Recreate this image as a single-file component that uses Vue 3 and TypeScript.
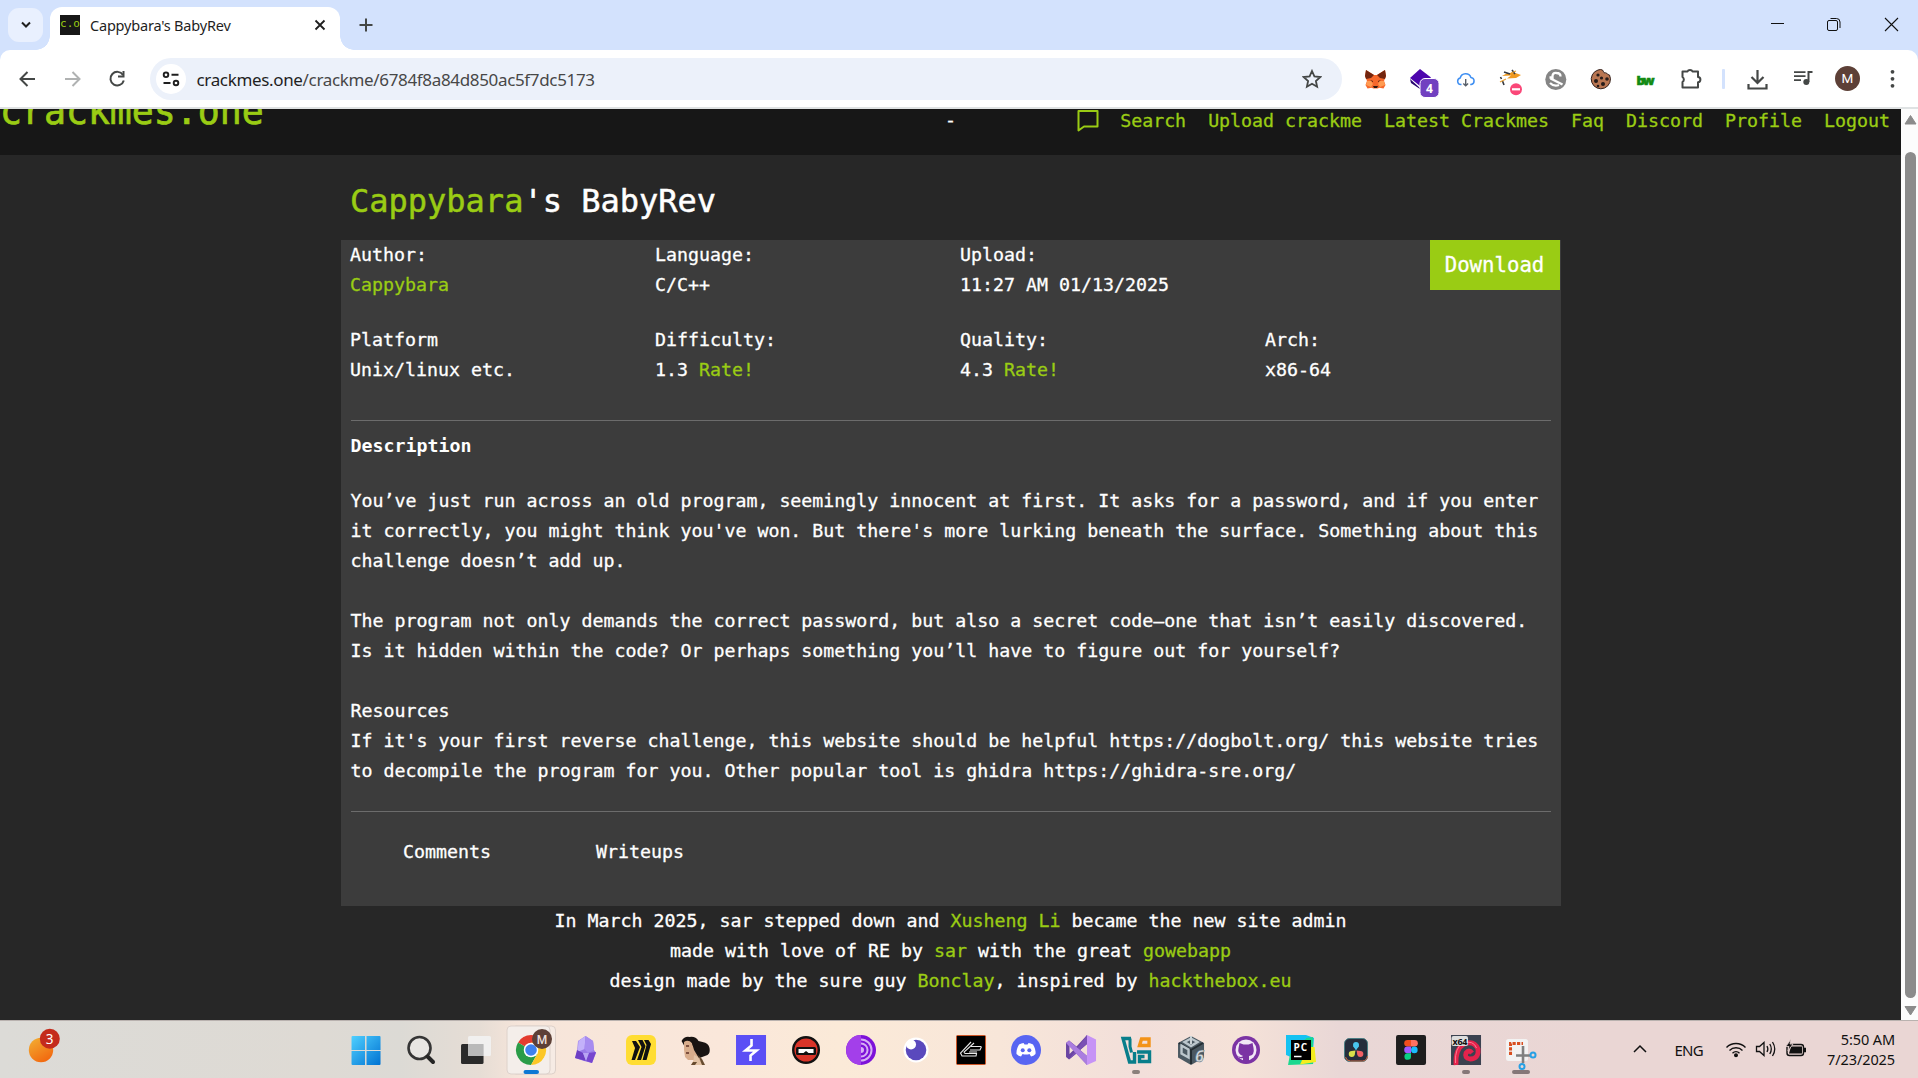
<script setup lang="ts">
interface Field {
  label: string
  value: string
  rate?: boolean
  link?: boolean
}

const navLinks: string[] = ['Search', 'Upload crackme', 'Latest Crackmes', 'Faq', 'Discord', 'Profile', 'Logout']

const topFields: Field[] = [
  { label: 'Author:', value: 'Cappybara', link: true },
  { label: 'Language:', value: 'C/C++' },
  { label: 'Upload:', value: '11:27 AM 01/13/2025' },
]

const bottomFields: Field[] = [
  { label: 'Platform', value: 'Unix/linux etc.' },
  { label: 'Difficulty:', value: '1.3', rate: true },
  { label: 'Quality:', value: '4.3', rate: true },
  { label: 'Arch:', value: 'x86-64' },
]

const description: string = [
  'You’ve just run across an old program, seemingly innocent at first. It asks for a password, and if you enter',
  "it correctly, you might think you've won. But there's more lurking beneath the surface. Something about this",
  'challenge doesn’t add up.',
  '',
  'The program not only demands the correct password, but also a secret code—one that isn’t easily discovered.',
  'Is it hidden within the code? Or perhaps something you’ll have to figure out for yourself?',
  '',
  'Resources',
  "If it's your first reverse challenge, this website should be helpful https://dogbolt.org/ this website tries",
  'to decompile the program for you. Other popular tool is ghidra https://ghidra-sre.org/',
].join('\n')
</script>

<template>
  <div class="screen">
    <div class="tabstrip">
      <div class="tab-search">
        <svg width="12" height="12" viewBox="0 0 12 12"><path d="M2 3.500 6 7.500l4-4" fill="none" stroke="#1f1f1f" stroke-width="2" /></svg>
      </div>
      <div class="tab">
        <span class="favicon">c.o</span>
        <span class="tab-title">Cappybara's BabyRev</span>
        <svg class="tab-close" width="12" height="12" viewBox="0 0 12 12"><path d="M1.500 1.500l9 9M10.500 1.500l-9 9" stroke="#1f1f1f" stroke-width="1.800" /></svg>
      </div>
      <svg class="new-tab" width="14" height="14" viewBox="0 0 14 14"><path d="M7 .5v13M.5 7h13" stroke="#444746" stroke-width="2" /></svg>
      <div class="window-buttons">
        <svg width="57" height="50" viewBox="0 0 57 50"><path d="M24 23.500h13" stroke="#111" /></svg>
        <svg width="57" height="50" viewBox="0 0 57 50"><path d="M26.500 18.500h6q3.500 0 3.500 3.500v6" fill="none" stroke="#111" /><rect x="23.500" y="20.500" width="10" height="10" rx="1.500" fill="none" stroke="#111" /></svg>
        <svg width="57" height="50" viewBox="0 0 57 50"><path d="M24 18l13 13M37 18l-13 13" stroke="#111" stroke-width="1.100" /></svg>
      </div>
    </div>

    <div class="toolbar">
      <svg class="nav-icon" width="45" height="57" viewBox="0 0 45 57"><path d="M30 29H16M22.500 22l-7 7 7 7" fill="none" stroke="#444746" stroke-width="2" /></svg>
      <svg class="nav-icon" width="45" height="57" viewBox="0 0 45 57"><path d="M15 29h14M22.500 22l7 7-7 7" fill="none" stroke="#b0b2b2" stroke-width="2" /></svg>
      <svg class="nav-icon" width="45" height="57" viewBox="0 0 45 57"><path d="M28 25A6.800 6.800 0 1 0 28.800 30.500" fill="none" stroke="#444746" stroke-width="2" /><path d="M28.500 21v5.500H23" fill="none" stroke="#444746" stroke-width="2" /></svg>
      <div class="omnibox">
        <span class="site-chip">
          <svg width="18" height="16" viewBox="0 0 18 16" fill="none" stroke="#1f1f1f" stroke-width="1.900"><circle cx="4" cy="3.800" r="2.300" /><path d="M9.500 3.800h7M1.500 12h7" /><circle cx="14" cy="12" r="2.300" /></svg>
        </span>
        <span class="url">crackmes.one<span class="path">/crackme/6784f8a84d850ac5f7dc5173</span></span>
        <svg class="star" width="20" height="20" viewBox="0 0 20 20"><path d="M10 2l2.400 5.400 5.900.6-4.400 4 1.200 5.800L10 14.800l-5.100 3 1.200-5.800-4.400-4 5.900-.6z" fill="none" stroke="#444746" stroke-width="1.800" /></svg>
      </div>

      <div class="extensions">
        <svg width="45" height="57" viewBox="0 0 45 57">
          <path d="M13 20l8 5h3l8-5 1 6-2 5 1.500 4-2 3.500-4-.8-2 .8h-4l-2-.8-4 .8-2-3.500 1.500-4-2-5z" fill="#f6682b" />
          <path d="M13 20l8 5-3 3-5 1-1-3zM32 20l-8 5 3 3 5 1 1-3z" fill="#72250f" />
          <path d="M14 31h4l2 3-2 3-5-2zM31 31h-4l-2 3 2 3 5-2z" fill="#ff9b52" />
          <path d="M17 30l3 1v1zM28 30l-3 1v1zM20 36h5l-1 2h-3z" fill="#2d1810" />
        </svg>
        <svg width="45" height="57" viewBox="0 0 45 57">
          <path d="M12 29l10 9 10-9v3L22 39l-9-6z" fill="#26046e" />
          <path d="M22 19l11 8.500L22 36 12 28z" fill="#4c05ad" />
          <rect x="22" y="28.500" width="19" height="19" rx="5" fill="#7140c0" stroke="#fff" />
          <text x="31.500" y="43" text-anchor="middle" fill="#fff" font-family="Open Sans, sans-serif" font-size="12" font-weight="700">4</text>
        </svg>
        <svg width="45" height="57" viewBox="0 0 45 57" fill="none">
          <path d="M18.500 34.500h-.8a3.300 3.300 0 0 1-.5-6.500 5.600 5.600 0 0 1 10.700-.6 3.600 3.600 0 0 1 .3 7.100h-1" stroke="#3f8ff2" stroke-width="1.500" />
          <path d="M22.700 29v6.500M20.300 33.400l2.400 2.400 2.400-2.400" stroke="#59606a" stroke-width="1.400" />
        </svg>
        <svg width="45" height="57" viewBox="0 0 45 57">
          <path d="M14 26q8-6 19-1l-5 3-9 .5 4-3z" fill="#f09a20" />
          <path d="M16 22l6 2M24 20l3 4M13.500 29l-1-2M16 35l-1.500-4" stroke="#34383f" stroke-width="1.600" />
          <path d="M18 29l-6 3M28 21l-5 2" stroke="#e7a33a" stroke-width="1.300" />
          <circle cx="28" cy="39.300" r="6" fill="#fa4778" /><path d="M24 39.300h8" stroke="#fff" stroke-width="2.200" />
        </svg>
        <svg width="45" height="57" viewBox="0 0 45 57">
          <circle cx="22.800" cy="29.500" r="10.500" fill="#858585" />
          <path d="M16.500 27.500h3q-.5-5 4-4.500 4 0 4 3.500M17.500 28.500l12 6M17 33q4 4 9 2" fill="none" stroke="#fff" stroke-width="2.300" />
        </svg>
        <svg width="45" height="57" viewBox="0 0 45 57">
          <path d="M20 20a9.600 9.600 0 1 0 11.500 5q-2 0-3-2-3 1-4-3-2-1-4.500 0z" fill="#b97652" stroke="#35201a" />
          <g fill="#261b19"><circle cx="20" cy="25" r="1.600" /><circle cx="18" cy="31" r="2" /><circle cx="23.500" cy="28" r="1.600" /><circle cx="29" cy="29" r="1.800" /><circle cx="25" cy="34" r="2" /><circle cx="20" cy="36" r="1.300" /></g>
        </svg>
        <svg width="45" height="57" viewBox="0 0 45 57"><text x="13.500" y="35" textLength="18" fill="#128a12" stroke="#128a12" stroke-width=".6" font-family="Open Sans, sans-serif" font-size="13" font-weight="800">bw</text></svg>
        <svg width="45" height="57" viewBox="0 0 45 57">
          <path d="M14.500 21.500h5a2.600 2.200 0 0 1 5 0h5.500v5.500a2.400 2.600 0 0 1 0 5.200V37.500H14.500V32a3 3 0 0 0 0-5z" fill="none" stroke="#444746" stroke-width="2" stroke-linejoin="round" />
        </svg>
      </div>
      <div class="separator"></div>
      <svg width="45" height="57" viewBox="0 0 45 57"><path d="M22.500 20v13M16.500 27l6 6 6-6M13.500 34v4.500h18V34" fill="none" stroke="#444746" stroke-width="2.200" /></svg>
      <svg width="45" height="57" viewBox="0 0 45 57"><path d="M14 22.200h11.500M14 26.200h11.500M14 30.200h7" stroke="#444746" stroke-width="1.800" /><path d="M28.500 32V22h4" fill="none" stroke="#444746" stroke-width="2" /><circle cx="26.300" cy="32" r="3" fill="#444746" /></svg>
      <svg width="45" height="57" viewBox="0 0 45 57"><circle cx="22.500" cy="28.500" r="12.500" fill="#5d4037" /><text x="22.500" y="33.300" text-anchor="middle" fill="#fff" font-family="Roboto, sans-serif" font-size="13.500">M</text></svg>
      <svg width="45" height="57" viewBox="0 0 45 57" fill="#444746"><circle cx="22.500" cy="21.800" r="1.900" /><circle cx="22.500" cy="28.800" r="1.900" /><circle cx="22.500" cy="35.800" r="1.900" /></svg>
    </div>

    <div class="viewport">
      <div class="page">
        <header class="site-header">
          <a class="logo">crackmes.one</a>
          <span class="dash">-</span>
          <nav class="site-nav">
            <svg class="chat" width="24" height="24" viewBox="0 0 24 24"><path d="M2.500 3h19v15.500H8l-5.500 4z" fill="none" stroke="#9acc14" stroke-width="2" stroke-linejoin="round" /></svg>
            <a v-for="link in navLinks" :key="link">{{ link }}</a>
          </nav>
        </header>

        <main class="content">
          <h3 class="title"><a>Cappybara</a>'s BabyRev</h3>
          <section class="card">
            <div class="top-row">
              <div v-for="f in topFields" :key="f.label" class="field">
                <div>{{ f.label }}</div>
                <a v-if="f.link">{{ f.value }}</a>
                <div v-else>{{ f.value }}</div>
              </div>
              <a class="download">Download</a>
            </div>
            <div class="fields">
              <div v-for="f in bottomFields" :key="f.label" class="field">
                <div>{{ f.label }}</div>
                <div>{{ f.value }} <a v-if="f.rate">Rate!</a></div>
              </div>
            </div>
            <div class="description">
              <b>Description</b>
              <p>{{ description }}</p>
            </div>
            <div class="tabs">
              <span>Comments</span>
              <span>Writeups</span>
            </div>
          </section>
          <footer class="site-footer">
            <div>In March 2025, sar stepped down and <a>Xusheng Li</a> became the new site admin</div>
            <div>made with love of RE by <a>sar</a> with the great <a>gowebapp</a></div>
            <div>design made by the sure guy <a>Bonclay</a>, inspired by <a>hackthebox.eu</a></div>
          </footer>
        </main>
      </div>
      <div class="scrollbar">
        <svg width="17" height="17" viewBox="0 0 17 17"><path d="M9.500 6.500l5.500 8.500H4z" fill="#8b8b8b" stroke="#8b8b8b" stroke-linejoin="round" /></svg>
        <div class="thumb"></div>
        <svg width="17" height="22" viewBox="0 0 17 22"><path d="M4 8.500h11L9.500 17z" fill="#8b8b8b" stroke="#8b8b8b" stroke-linejoin="round" /></svg>
      </div>
    </div>

    <div class="taskbar">
      <svg class="weather" width="40" height="57" viewBox="0 0 40 57">
        <defs><linearGradient id="sun" x1="0" y1="0" x2=".6" y2="1"><stop offset="0" stop-color="#f2b134" /><stop offset="1" stop-color="#f26a10" /></linearGradient></defs>
        <circle cx="17" cy="29" r="12.200" fill="url(#sun)" />
        <circle cx="25.800" cy="17.800" r="10" fill="#c42b1c" />
        <text x="25.600" y="22.500" text-anchor="middle" fill="#fff" font-family="Noto Sans, sans-serif" font-size="13.500">3</text>
      </svg>
      <div class="apps">
        <svg viewBox="0 0 55 57">
          <defs><linearGradient id="win" x1="0" y1="0" x2="1" y2="1"><stop offset="0" stop-color="#4fd0ff" /><stop offset="1" stop-color="#0072d2" /></linearGradient></defs>
          <path d="M12.500 16q0-1 1-1H26v14H12.500zM27.500 15h13q1 0 1 1v13h-14zM12.500 30H26v14H13.500q-1 0-1-1zM27.500 30h14v13q0 1-1 1h-13z" fill="url(#win)" />
        </svg>
        <svg viewBox="0 0 55 57"><circle cx="25.500" cy="27" r="11" fill="#e8e6e3" stroke="#353535" stroke-width="2.600" /><path d="M33.500 35.500l5.500 5.500" stroke="#252525" stroke-width="4" stroke-linecap="round" /></svg>
        <svg viewBox="0 0 55 57"><rect x="12" y="23" width="22.500" height="20" rx="1.500" fill="#2a2a2a" /><rect x="19" y="15" width="23" height="20" rx="1.500" fill="#f2f2f2" fill-opacity=".9" /><rect x="19" y="23" width="15.500" height="12" fill="#b9b9b9" /></svg>
        <svg viewBox="0 0 55 57">
          <rect x="8" y="5" width="43.500" height="48" rx="4" fill="#f6ebe4" stroke="#ddd0c9" />
          <rect x="3" y="5" width="43" height="48" rx="4" fill="#f4eeea" stroke="#ddd2cc" />
          <circle cx="27" cy="29" r="15" fill="#fff" />
          <path d="M27 29L14 21.500A15 15 0 0 1 40 21.500z" fill="#e33b2e" />
          <path d="M27 29L14 21.500A15 15 0 0 0 27 44L33.500 32.500z" fill="#2a9c48" />
          <path d="M33.500 32.500L27 44A15 15 0 0 0 40 21.500H27z" fill="#fcc727" />
          <circle cx="27" cy="29" r="7.300" fill="#fff" /><circle cx="27" cy="29" r="5.800" fill="#3f81ee" />
          <circle cx="38" cy="18" r="10" fill="#5d4037" />
          <text x="38" y="22.500" text-anchor="middle" fill="#eadfdb" font-family="Roboto, sans-serif" font-weight="500" font-size="12">M</text>
          <rect x="19.500" y="49" width="15.500" height="4" rx="2" fill="#0d78d4" />
        </svg>
        <svg viewBox="0 0 55 57">
          <path d="M26.500 15l7.500 5 1 9 2 3-4 10-8-2-9-3 2-6 1-11z" fill="#9a7ce8" />
          <path d="M26.500 15l-7 5-1 11 7-3z" fill="#c3b1fa" /><path d="M26.500 15l7.500 5 1 9-6 3-3.500-4z" fill="#a78cf0" />
          <path d="M18 29l6 3 3 8-11-3z" fill="#6d3fc4" /><path d="M29 32l8-1-4 11-6-2z" fill="#7747cf" /><path d="M24 32l6 0-3 8z" fill="#b9a5f3" />
        </svg>
        <svg viewBox="0 0 55 57"><rect x="12" y="14" width="30" height="30" rx="6" fill="#ffdd33" /><path d="M18 20h4l4 6-5 13h-3.500l3.500-12zM24 19h4.500l3 6-4.500 14H23l4.500-13zM30 19h4.500l2.500 4-4.500 16H28.500l4-15z" fill="#111" /></svg>
        <svg viewBox="0 0 55 57">
          <path d="M12.500 20q3-5 8-4 6-1 9 4l4 1q6 1 7 6 1 5-2 7l-8 3H20l3-5-6-4z" fill="#191412" />
          <path d="M15 21q4-3 8 1l2 7 3 5 6 10H22l3-5-6 0-3-3-1-7z" fill="#d8ad8c" />
          <path d="M25 34l4 2 4 8H24z" fill="#e3c3a5" /><path d="M29 34l4 4 3 6h-3zM24 41h4l-2 3h-4z" fill="#674c30" />
          <path d="M17 25h3M17 32h3" stroke="#5d3023" stroke-width="1.300" />
          <path d="M22 20q4 1 5 9l-3-4z" fill="#191412" />
        </svg>
        <svg viewBox="0 0 55 57"><rect x="12" y="14" width="30" height="30" fill="#5b4ff5" /><path d="M27.500 18v6.500l-6 5h11l-6 5V40" fill="none" stroke="#fff" stroke-width="2.600" /></svg>
        <svg viewBox="0 0 55 57"><circle cx="27" cy="29" r="12.800" fill="#d93429" stroke="#111" stroke-width="2.400" /><rect x="17" y="26" width="20" height="8" rx="1.500" fill="#111" /><path d="M19.500 28h15v4h-5l-2.500-2-2.500 2h-5z" fill="#fff" /></svg>
        <svg viewBox="0 0 55 57">
          <circle cx="27" cy="29" r="15" fill="#7d12d9" /><path d="M27 14a15 15 0 0 0 0 30z" fill="#a33fea" />
          <path d="M27 18.500a10.500 10.500 0 0 1 0 21M27 22.500a6.500 6.500 0 0 1 0 13" fill="none" stroke="#d7b0f4" stroke-width="2" /><path d="M27 26a3 3 0 0 1 0 6z" fill="#d7b0f4" />
        </svg>
        <svg viewBox="0 0 55 57"><circle cx="27" cy="29" r="12.500" fill="#fff" /><circle cx="27" cy="29" r="10.300" fill="#5a49bd" /><circle cx="22" cy="23.500" r="5" fill="#fff" /></svg>
        <svg viewBox="0 0 55 57"><rect x="12.500" y="14.500" width="29" height="29" rx="1" fill="#000" stroke="#cf5525" /><path d="M27 21L16.500 32l1.500 3h14l.5-2.500H21l-1-1.500 10-9M27 25.500h10M26 29h10l1.500-3.500M25 31h8" fill="none" stroke="#e8e8e8" stroke-width="1.100" /></svg>
        <svg viewBox="0 0 55 57"><circle cx="27" cy="29" r="15" fill="#5865f2" /><path d="M20 23.500q2.500-1.500 4.500-1.500l1 1.500h3l1-1.500q2 0 4.500 1.500 3 5 2.500 9.500-2 2-4.500 2.500l-1.500-2.500q-3.500 1-7 0L22 35.500q-2.500-.5-4.500-2.500-.5-4.500 2.500-9.500z" fill="#fff" /><circle cx="23.700" cy="29.300" r="2" fill="#5865f2" /><circle cx="30.300" cy="29.300" r="2" fill="#5865f2" /></svg>
        <svg viewBox="0 0 55 57"><path d="M12 22l3-2.500 7.500 6L33 14v30L22.500 32.500l-7.500 6L12 36zM15.500 25v8l4-4zM33 23v12l-7-6z" fill="#6a44a2" fill-rule="evenodd" /><path d="M15 38.500l18-24.500v9z" fill="#7a50b4" /><path d="M12 22l3-2.500 18 15.500v9z" fill="#aa7ddf" /><path d="M33 14l9 4.500v21.500l-9 4z" fill="#c693f6" /></svg>
        <svg viewBox="0 0 55 57"><path d="M22 17.500h-8L20.500 41h5V31" fill="none" stroke="#087e8b" stroke-width="3.400" /><path d="M21 17.500v8l1.500 6" fill="none" stroke="#087e8b" stroke-width="3" /><path d="M30.500 24.500l2-6.500h7.500v6.500z" fill="none" stroke="#f39318" stroke-width="3.400" /><path d="M28 31h12.500v9.500H30.500v-5h5" fill="none" stroke="#087e8b" stroke-width="3.400" /><rect x="23" y="49" width="8" height="4" rx="2" fill="#8a807b" /></svg>
        <svg viewBox="0 0 55 57"><path d="M27 15l13 7v14.500L27 44l-13-7.500V22z" fill="#4b5962" /><path d="M27 29v14M27 29l12-7M27 29l-12-7" stroke="#242e34" stroke-width="2" /><path d="M17.500 24.500l7 4v8l-7-4zM20.500 21l6.500-3.500 6.500 3.500-6.500 4z" fill="none" stroke="#bcc7cd" stroke-width="2.400" /><path d="M27 15v8" stroke="#cbd3d7" stroke-width="2" /><text x="31" y="40.500" fill="#d5dce0" stroke="#68747b" stroke-width=".5" font-family="Open Sans, sans-serif" font-size="16" font-weight="700" font-style="italic">6</text></svg>
        <svg viewBox="0 0 55 57"><circle cx="27" cy="29" r="14" fill="#7b33a4" /><circle cx="27" cy="29" r="10.500" fill="#f1e7f5" /><path d="M20.500 22l4 1.500h5l4-1.500 1 5q1.500 7-4.500 8v5h-6v-3q-4 1-5-2 3 2 5 0-6-2-4.500-8z" fill="#7b33a4" /></svg>
        <svg viewBox="0 0 55 57"><path d="M12 14h20l8 3-1 12-20 8-7-3z" fill="#15c2f2" /><path d="M32.500 17l6.500-1v10l2 5-2 12-25 1 2-11z" fill="#1bd890" /><path d="M34 26h6.500l1.500 15-16 2.500z" fill="#f4ed1f" /><rect x="17" y="19" width="20" height="20" fill="#000" /><text x="19.500" y="29.500" textLength="13.500" fill="#fff" font-family="Open Sans, sans-serif" font-size="10" font-weight="700">PC</text><path d="M20 35.500h7.500" stroke="#fff" stroke-width="1.500" /></svg>
        <svg viewBox="0 0 55 57"><rect x="15.500" y="17.500" width="23" height="23" rx="5" fill="#252d3c" stroke="#4a7d83" /><path d="M16.500 36q1 4 5 4h12q4 0 5-5" fill="none" stroke="#cf6742" /><circle cx="27" cy="24" r="3" fill="#49c5ee" /><path d="M24.200 25h5.600L27 29.500z" fill="#49c5ee" /><circle cx="22.700" cy="33" r="3" fill="#d9df4b" /><path d="M22.500 30l4-.5-1 4.500z" fill="#d9df4b" /><circle cx="31.300" cy="33" r="3" fill="#f16165" /><path d="M31.500 30l-4-.5 1 4.500z" fill="#f16165" /></svg>
        <svg viewBox="0 0 55 57"><rect x="12" y="14" width="30" height="30" rx="2" fill="#1e1e1e" /><path d="M27 19h-3.500a3.300 3.300 0 0 0 0 6.600H27z" fill="#f24e1e" /><path d="M27 19h3.500a3.300 3.300 0 0 1 0 6.600H27z" fill="#ff7262" /><path d="M27 25.600h-3.500a3.300 3.300 0 0 0 0 6.600H27z" fill="#a259ff" /><circle cx="30.300" cy="28.900" r="3.300" fill="#1abcfe" /><path d="M27 32.200h-3.500a3.300 3.300 0 1 0 3.500 3.300z" fill="#0acf83" /></svg>
        <svg viewBox="0 0 55 57"><rect x="12" y="14" width="30" height="30" fill="#3b4250" /><path d="M17 44q-1-16 8-21 10-4 14 5 1 10-8 10-6-1-4-6 3-4 6 0" fill="none" stroke="#e5234c" stroke-width="4.800" /><path d="M16.500 42q-1-16 8-20 10-3 13 5" fill="none" stroke="#ff7891" stroke-width="1" /><rect x="12.500" y="15" width="16.500" height="10" rx="2" fill="#ddd" /><text x="13.500" y="23.500" textLength="15" fill="#111" font-family="Open Sans, sans-serif" font-size="9" font-weight="700">x64</text><rect x="23" y="49" width="8" height="4" rx="2" fill="#857778" /></svg>
        <svg viewBox="0 0 55 57"><rect x="12" y="18" width="22" height="22" rx="2.500" fill="#f3f3f3" /><path d="M16.500 34V22.500h12.500" fill="none" stroke="#d94e1f" stroke-width="3" stroke-dasharray="3.200 1.300" /><path d="M29 25v17M22 34.500h14" stroke="#808080" stroke-width="2.600" /><circle cx="28" cy="45.500" r="2.500" fill="none" stroke="#27a0e4" stroke-width="2" /><circle cx="39" cy="34" r="2.500" fill="none" stroke="#27a0e4" stroke-width="2" /><rect x="18" y="49" width="18" height="4" rx="2" fill="#857778" /></svg>
      </div>
      <div class="tray">
        <svg width="14" height="10" viewBox="0 0 14 10"><path d="M1 8l6-6 6 6" fill="none" stroke="#111" stroke-width="1.500" /></svg>
        <span class="lang">ENG</span>
        <svg class="wifi" width="22" height="18" viewBox="0 0 22 18" fill="none" stroke="#111" stroke-width="1.400"><path d="M1.500 7.500a13.400 13.400 0 0 1 19 0M4.500 10.500a9.200 9.200 0 0 1 13 0M7.500 13.200a5 5 0 0 1 7 0" /><circle cx="11" cy="15.300" r="1.300" fill="#111" /></svg>
        <svg class="speaker" width="22" height="18" viewBox="0 0 22 18" fill="none" stroke="#111" stroke-width="1.300"><path d="M1.500 6.500h3l4.500-4v13l-4.500-4h-3zM12 6q1.700 3 0 6M14.800 4q3 5 0 10M17.500 2q4.500 7 0 14" /></svg>
        <svg class="battery" width="22" height="18" viewBox="0 0 22 18"><rect x="2" y="4.500" width="16.500" height="11" rx="2.500" fill="none" stroke="#111" stroke-width="1.400" /><path d="M6 6.500h11v7H4z" fill="#111" /><path d="M19.500 8h1v4h-1z" fill="#111" stroke="#111" /><path d="M6 -1L1 6.500h3L3 11l5-7H5z" fill="#111" stroke="#ead6d4" stroke-width=".8" /></svg>
        <div class="clock"><div>5:50 AM</div><div>7/23/2025</div></div>
      </div>
    </div>
  </div>
</template>

<style>
body {
  margin: 0;
}
</style>

<style scoped>
.screen {
  width: 1918px;
  height: 1078px;
  display: flex;
  flex-direction: column;
  overflow: hidden;
  background: #d3e2fd;
  font-family: "Noto Sans", sans-serif;
}
svg {
  display: block;
  flex: none;
}
.tabstrip {
  height: 50px;
  flex: none;
  display: flex;
  align-items: flex-start;
}
.tab-search {
  width: 35px;
  height: 34px;
  margin: 8px 7px 0 8px;
  border-radius: 11px;
  background: #e9f0fe;
  display: flex;
  align-items: center;
  justify-content: center;
}
.tab {
  box-sizing: border-box;
  position: relative;
  width: 290px;
  height: 43px;
  margin-top: 7px;
  padding: 0 14px 7px 10px;
  border-radius: 12px 12px 0 0;
  background: #fff;
  display: flex;
  align-items: center;
}
.tab::before,
.tab::after {
  content: "";
  position: absolute;
  bottom: 0;
  width: 14px;
  height: 14px;
}
.tab::before {
  left: -14px;
  background: radial-gradient(circle at 0 0, transparent 13.5px, #fff 14px);
}
.tab::after {
  right: -14px;
  background: radial-gradient(circle at 100% 0, transparent 13.5px, #fff 14px);
}
.favicon {
  width: 20px;
  height: 20px;
  background: #171717;
  color: #9acc14;
  font: 11px/18px "DejaVu Sans Mono", monospace;
  text-align: center;
  overflow: hidden;
}
.tab-title {
  flex: 1;
  margin-left: 10px;
  font-size: 14.500px;
  letter-spacing: -0.2px;
  white-space: nowrap;
  color: #1f1f1f;
}
.new-tab {
  margin: 18px 0 0 19px;
}
.window-buttons {
  margin-left: auto;
  display: flex;
}
.toolbar {
  height: 57px;
  flex: none;
  display: flex;
  background: #fff;
  border-radius: 10px 10px 0 0;
  padding-left: 5px;
}
.omnibox {
  box-sizing: border-box;
  width: 1192px;
  height: 42px;
  margin: 8px 11px 0 10px;
  padding: 0 20px 0 6px;
  border-radius: 21px;
  background: #ecf1fa;
  display: flex;
  align-items: center;
}
.site-chip {
  width: 30px;
  height: 30px;
  border-radius: 50%;
  background: #fff;
  display: flex;
  align-items: center;
  justify-content: center;
}
.url {
  flex: 1;
  margin-left: 10.500px;
  font-size: 17px;
  letter-spacing: -0.34px;
  white-space: nowrap;
  color: #1f1f1f;
}
.path {
  color: #474747;
}
.extensions {
  display: flex;
}
.separator {
  width: 3px;
  height: 20px;
  margin: 19px 10px 0 9px;
  background: #d3e2fd;
  border-radius: 1px;
}
.viewport {
  height: 911px;
  flex: none;
  display: flex;
  border-top: 2px solid #dfe2e3;
}
.page {
  width: 1901px;
  height: 911px;
  overflow: hidden;
  background: #272727;
  color: #fff;
  font-family: "DejaVu Sans Mono", monospace;
  font-size: 18.270px;
  line-height: 30px;
  -webkit-text-stroke: 0.3px;
}
.page a {
  color: #9acc14;
}
.site-header {
  height: 46px;
  overflow: hidden;
  background: #171717;
  display: grid;
  grid-template-columns: 1fr auto 1fr;
  align-items: start;
}
.logo {
  margin-top: -15px;
  font-size: 36.500px;
  line-height: 36px;
  -webkit-text-stroke: 0.7px;
}
.dash {
  margin-top: -4px;
}
.site-nav {
  display: flex;
  justify-content: flex-end;
  gap: 22px;
  padding-right: 11px;
  margin-top: -3px;
  white-space: nowrap;
}
.chat {
  margin: 2px -2px 0 0;
}
.content {
  width: 1220px;
  margin: 0 auto;
}
.title {
  height: 85px;
  box-sizing: border-box;
  margin: 0;
  padding: 25px 0 0 9.500px;
  font-size: 32px;
  line-height: 42px;
  font-weight: 400;
  -webkit-text-stroke: 0.5px;
}
.card {
  height: 666px;
  background: #3c3c3c;
}
.top-row {
  display: flex;
  height: 85px;
}
.fields {
  display: flex;
  height: 95px;
}
.field {
  box-sizing: border-box;
  width: 305px;
  padding-left: 9.500px;
  white-space: nowrap;
}
.download {
  box-sizing: border-box;
  width: 130px;
  height: 50px;
  margin: 0 1px 0 auto;
  background: #9acc14;
  font-size: 20.700px;
  line-height: 51px;
  text-align: center;
}
.card .download {
  color: #fff;
}
.description {
  height: 390px;
  margin: 0 10px;
  border-top: 1px solid #6c6c6c;
  border-bottom: 1px solid #6c6c6c;
}
.description b {
  display: block;
  margin-top: 10px;
  -webkit-text-stroke: 0;
}
.description p {
  margin: 25px 0 0;
  white-space: pre;
}
.tabs {
  display: flex;
  gap: 105px;
  padding: 25px 0 0 62.500px;
}
.site-footer {
  text-align: center;
}
.scrollbar {
  width: 17px;
  background: #fcfcfc;
  display: flex;
  flex-direction: column;
}
.thumb {
  width: 11px;
  height: 847px;
  margin: 26px 0 0 4px;
  border-radius: 6px;
  background: #8b8b8b;
}
.taskbar {
  height: 57px;
  flex: none;
  border-top: 1px solid #b9b2af;
  display: flex;
  background: linear-gradient(90deg, #dcdbd7 0, #dedad4 320px, #dcdad5 400px, #e6ddd5 480px, #f6e5da 520px, #fae7da 720px, #fbead8 840px, #f8e6d9 1000px, #f2dfda 1140px, #f5e2d8 1240px, #e9d7d6 1340px, #ead6d4 1600px, #ead6d4 100%);
}
.weather {
  margin-left: 24px;
}
.apps {
  display: flex;
  margin-left: 274.500px;
}
.apps svg {
  width: 55.050px;
  height: 57px;
  overflow: visible;
}
.tray {
  margin-left: auto;
  padding: 0 23px 2px 0;
  display: flex;
  align-items: center;
  color: #111;
  font-size: 14.500px;
}
.tray svg {
  overflow: visible;
}
.lang {
  margin: 2px 22px 0 27px;
  font-size: 15px;
  letter-spacing: -0.7px;
}
.speaker {
  margin: 0 8px;
}
.clock {
  margin-left: 16px;
  width: 72px;
  text-align: right;
  line-height: 20px;
  letter-spacing: -0.1px;
  white-space: nowrap;
}
</style>
